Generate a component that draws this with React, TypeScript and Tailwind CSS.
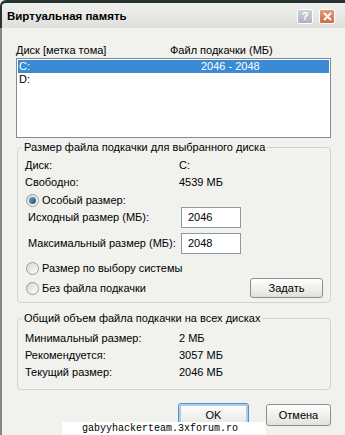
import React from "react";

const sans = "font-['Liberation_Sans',Arial,sans-serif]";

function Radio({ checked }: { checked?: boolean }) {
  return (
    <span className="flex h-[13px] w-[13px] shrink-0 items-center justify-center rounded-full border border-[#9a9a98] bg-gradient-to-br from-[#d6d6d2] to-[#ffffff]">
      {checked && (
        <span className="h-[7px] w-[7px] rounded-full bg-gradient-to-br from-[#6fa7d0] to-[#1d4f7a]" />
      )}
    </span>
  );
}

function Group({ title, children }: { title: string; children: React.ReactNode }) {
  return (
    <fieldset className="ml-[1px] rounded-[4px] border border-[#d3d3cc]">
      <legend className="ml-[4px] px-[2px] leading-[14px]">{title}</legend>
      {children}
    </fieldset>
  );
}

function Row({ label, value, className }: { label: string; value: string; className?: string }) {
  return (
    <div className={"flex h-[14px] items-center pl-[7px] leading-[14px] " + (className ?? "")}>
      <span className="w-[154px]">{label}</span>
      <span>{value}</span>
    </div>
  );
}

function SizeField({ label, value, className }: { label: string; value: string; className?: string }) {
  return (
    <div className={"flex h-[21px] items-center pl-[10px] " + (className ?? "")}>
      <span className="w-[153px] whitespace-nowrap">{label}</span>
      <div className="h-[21px] w-[60px] border border-[#8c9aa8] bg-white pl-[6px] leading-[19px]">
        {value}
      </div>
    </div>
  );
}

export default function App() {
  return (
    <div className={"relative h-[435px] w-[345px] overflow-hidden bg-[#f1f1ed] text-[11px] text-black " + sans}>
      {/* title bar */}
      <div className="flex h-[28px] items-center justify-between rounded-tl-[6px] border-t-[3px] border-l-[2px] border-[#273232] bg-gradient-to-b from-[#f0f0ed] to-[#dfdfdb] pl-[5px] pr-[10px]">
        <span className="text-[11.5px] font-bold leading-[14px]">Виртуальная память</span>
        <div className="flex gap-[6px] pt-[2px]">
          <span className="flex h-[15px] w-[16px] items-center justify-center rounded-[2px] border border-white bg-gradient-to-b from-[#cdd3d9] to-[#aab4be] text-[11px] font-bold leading-none text-white">
            ?
          </span>
          <span className="flex h-[15px] w-[16px] items-center justify-center rounded-[2px] border border-white bg-gradient-to-b from-[#e39a80] to-[#cf6a48]">
            <svg width="9" height="9" viewBox="0 0 9 9">
              <path d="M1 1L8 8M8 1L1 8" stroke="white" strokeWidth="2" />
            </svg>
          </span>
        </div>
      </div>

      {/* body */}
      <div className="flex h-[407px] flex-col border-l-[2px] border-[#858683] pl-[14px] pr-[14px]">
        <div className="mt-[15px] flex h-[14px] items-center leading-[14px]">
          <span className="w-[154px]">Диск [метка тома]</span>
          <span>Файл подкачки (МБ)</span>
        </div>

        <div className="mt-[1px] h-[80px] border border-[#7f8c99] bg-white p-[1px]">
          <div className="flex h-[13px] items-center bg-[#3a8ad4] pl-[1px] leading-[13px] text-white">
            <span className="w-[182px]">C:</span>
            <span>2046 - 2048</span>
          </div>
          <div className="flex h-[13px] items-center pl-[1px] leading-[13px]">D:</div>
        </div>

        <div className="mt-[2px]">
          <Group title="Размер файла подкачки для выбранного диска">
            <Row className="mt-[4px]" label="Диск:" value="C:" />
            <Row className="mt-[3px]" label="Свободно:" value="4539 МБ" />
            <div className="mt-[4px] flex h-[14px] items-center gap-[3px] pl-[8px]">
              <Radio checked />
              <span>Особый размер:</span>
            </div>
            <SizeField label="Исходный размер (МБ):" value="2046" />
            <SizeField className="mt-[5px]" label="Максимальный размер (МБ):" value="2048" />
            <div className="mt-[7px] flex h-[14px] items-center gap-[3px] pl-[8px]">
              <Radio />
              <span>Размер по выбору системы</span>
            </div>
            <div className="mt-[3px] mb-[4px] flex h-[20px] items-center pl-[8px] pr-[7px]">
              <Radio />
              <span className="ml-[3px]">Без файла подкачки</span>
              <button className="ml-auto h-[20px] w-[73px] rounded-[3px] border border-[#8e8e8c] bg-gradient-to-b from-white to-[#e1e1dc]">
                Задать
              </button>
            </div>
          </Group>
        </div>

        <div className="mt-[8px]">
          <Group title="Общий объем файла подкачки на всех дисках">
            <Row className="mt-[6px]" label="Минимальный размер:" value="2 МБ" />
            <Row className="mt-[3px]" label="Рекомендуется:" value="3057 МБ" />
            <Row className="mt-[3px] mb-[10px]" label="Текущий размер:" value="2046 МБ" />
          </Group>
        </div>

        <div className="mt-[13px] flex justify-end gap-[17px]">
          <button className="h-[24px] w-[71px] rounded-[3px] border border-[#5c8fbd] bg-gradient-to-b from-white to-[#e4e4df] shadow-[inset_0_0_0_2px_#a9cdea]">
            OK
          </button>
          <button className="mt-[1px] h-[22px] w-[65px] rounded-[3px] border border-[#8e8e8c] bg-gradient-to-b from-white to-[#e1e1dc]">
            Отмена
          </button>
        </div>
      </div>

      {/* watermark */}
      <div className="absolute left-[62px] top-[422px] h-[13px] w-[203px] bg-white pl-[20px] font-['Liberation_Mono',monospace] text-[10px] leading-[13px]">
        gabyyhackerteam.3xforum.ro
      </div>
    </div>
  );
}
